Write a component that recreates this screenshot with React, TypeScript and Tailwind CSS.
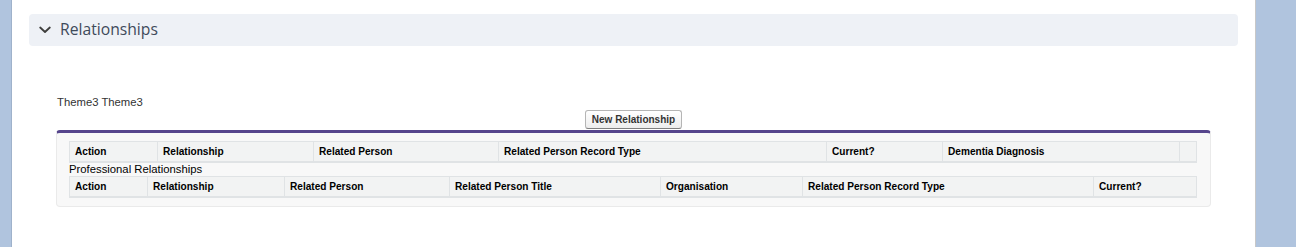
import React from "react";

const t1 = [
  { w: 88, l: "Action" },
  { w: 156, l: "Relationship" },
  { w: 185, l: "Related Person" },
  { w: 328, l: "Related Person Record Type" },
  { w: 116, l: "Current?" },
  { w: 237, l: "Dementia Diagnosis" },
  { w: 18, l: "" },
];
const t2 = [
  { w: 78, l: "Action" },
  { w: 137, l: "Relationship" },
  { w: 165, l: "Related Person" },
  { w: 211, l: "Related Person Title" },
  { w: 142, l: "Organisation" },
  { w: 291, l: "Related Person Record Type" },
  { w: 104, l: "Current?" },
];

function HeaderTable({ cols }: { cols: { w: number; l: string }[] }) {
  return (
    <div className="flex h-[22px] w-[1128px] border border-[#e0e3e5] border-b-2 bg-[#f2f3f3]">
      {cols.map((c, i) => (
        <div
          key={i}
          style={{ width: i === 0 ? c.w - 1 : c.w }}
          className={`flex items-center pl-[5px] text-[10.1px] font-bold text-[#000] shrink-0 ${i > 0 ? "border-l border-[#e0e3e5]" : ""}`}
        >
          {c.l}
        </div>
      ))}
    </div>
  );
}

export default function App() {
  return (
    <div className="flex w-[1296px] h-[247px] bg-white" style={{ fontFamily: "'Liberation Sans', Arial, sans-serif" }}>
      <div className="w-[11px] bg-[#b0c4de] border-r border-[#9fb2cb] box-content shrink-0" />
      <div className="flex-1 flex flex-col bg-white">
        <div className="mx-[17px] mt-[14px] h-[32px] rounded-[4px] bg-[#eef1f6] flex items-center">
          <svg width="12" height="8" viewBox="0 0 12 8" className="ml-[10px]">
            <path d="M1.2 1.5 L6 6 L10.8 1.5" fill="none" stroke="#3e3e3c" strokeWidth="1.8" strokeLinecap="round" strokeLinejoin="round" />
          </svg>
          <span className="ml-[9px] text-[15.7px] text-[#3e4a5a]" style={{ fontFamily: "'Open Sans', sans-serif" }}>
            Relationships
          </span>
        </div>
        <div className="mx-[44px] mt-[48px] flex flex-col">
          <div className="pl-[1px] h-[16px] flex items-center text-[11.3px] text-[#333]">Theme3 Theme3</div>
          <div className="flex justify-center">
            <button className="h-[19px] w-[97px] rounded-[3px] border border-[#b5b5b5] border-b-[#7f7f7f] bg-gradient-to-b from-white to-[#ededed] text-[10px] font-bold text-[#333] flex items-center justify-center">
              New Relationship
            </button>
          </div>
          <div className="mt-[1px] border-t-[3px] border-t-[#56458c] border border-[#eaeaea] rounded-[4px] bg-[#f8f8f8] pt-[8px] pb-[8px] pl-[12px]">
            <HeaderTable cols={t1} />
            <div className="h-[13px] flex items-center text-[11.3px] text-[#000]">Professional Relationships</div>
            <HeaderTable cols={t2} />
          </div>
        </div>
      </div>
      <div className="w-[40px] bg-[#b0c4de] border-l border-[#c8c8c8] box-content shrink-0" />
    </div>
  );
}
